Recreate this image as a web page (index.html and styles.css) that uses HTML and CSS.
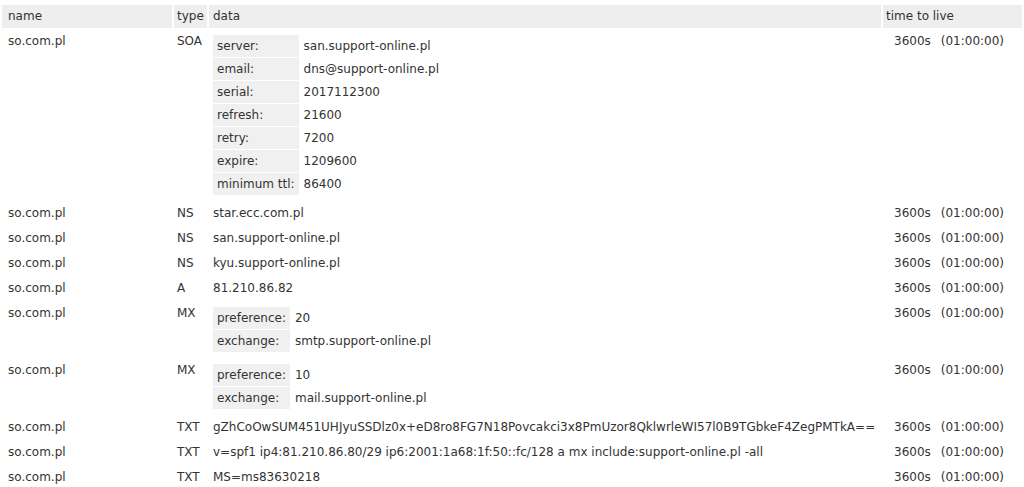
FILE: index.html
```html
<!DOCTYPE html>
<html>
<head>
<meta charset="utf-8">
<link rel="stylesheet" href="styles.css">
</head>
<body>
<table class="dns">
  <colgroup>
    <col class="c-name"><col class="c-type"><col class="c-data"><col class="c-ttl">
  </colgroup>
  <thead>
    <tr><th class="name">name</th><th class="type">type</th><th class="data">data</th><th class="ttl">time to live</th></tr>
  </thead>
  <tbody>
    <tr>
      <td class="name">so.com.pl</td><td class="type">SOA</td>
      <td class="data">
        <table class="sub">
          <tr><td class="k">server:</td><td class="v">san.support-online.pl</td></tr>
          <tr><td class="k">email:</td><td class="v">dns@support-online.pl</td></tr>
          <tr><td class="k">serial:</td><td class="v">2017112300</td></tr>
          <tr><td class="k">refresh:</td><td class="v">21600</td></tr>
          <tr><td class="k">retry:</td><td class="v">7200</td></tr>
          <tr><td class="k">expire:</td><td class="v">1209600</td></tr>
          <tr><td class="k">minimum ttl:</td><td class="v">86400</td></tr>
        </table>
      </td>
      <td class="ttl">3600s<span class="hms">(01:00:00)</span></td>
    </tr>
    <tr><td class="name">so.com.pl</td><td class="type">NS</td><td class="data">star.ecc.com.pl</td><td class="ttl">3600s<span class="hms">(01:00:00)</span></td></tr>
    <tr><td class="name">so.com.pl</td><td class="type">NS</td><td class="data">san.support-online.pl</td><td class="ttl">3600s<span class="hms">(01:00:00)</span></td></tr>
    <tr><td class="name">so.com.pl</td><td class="type">NS</td><td class="data">kyu.support-online.pl</td><td class="ttl">3600s<span class="hms">(01:00:00)</span></td></tr>
    <tr><td class="name">so.com.pl</td><td class="type">A</td><td class="data">81.210.86.82</td><td class="ttl">3600s<span class="hms">(01:00:00)</span></td></tr>
    <tr>
      <td class="name">so.com.pl</td><td class="type">MX</td>
      <td class="data">
        <table class="sub">
          <tr><td class="k">preference:</td><td class="v">20</td></tr>
          <tr><td class="k">exchange:</td><td class="v">smtp.support-online.pl</td></tr>
        </table>
      </td>
      <td class="ttl">3600s<span class="hms">(01:00:00)</span></td>
    </tr>
    <tr>
      <td class="name">so.com.pl</td><td class="type">MX</td>
      <td class="data">
        <table class="sub">
          <tr><td class="k">preference:</td><td class="v">10</td></tr>
          <tr><td class="k">exchange:</td><td class="v">mail.support-online.pl</td></tr>
        </table>
      </td>
      <td class="ttl">3600s<span class="hms">(01:00:00)</span></td>
    </tr>
    <tr><td class="name">so.com.pl</td><td class="type">TXT</td><td class="data">gZhCoOwSUM451UHJyuSSDlz0x+eD8ro8FG7N18Povcakci3x8PmUzor8QklwrleWI57l0B9TGbkeF4ZegPMTkA==</td><td class="ttl">3600s<span class="hms">(01:00:00)</span></td></tr>
    <tr><td class="name">so.com.pl</td><td class="type">TXT</td><td class="data">v=spf1 ip4:81.210.86.80/29 ip6:2001:1a68:1f:50::fc/128 a mx include:support-online.pl -all</td><td class="ttl">3600s<span class="hms">(01:00:00)</span></td></tr>
    <tr><td class="name">so.com.pl</td><td class="type">TXT</td><td class="data">MS=ms83630218</td><td class="ttl">3600s<span class="hms">(01:00:00)</span></td></tr>
  </tbody>
</table>
</body>
</html>
```

FILE: styles.css
```css
html, body {
  margin: 0;
  padding: 0;
  background: #ffffff;
}
body {
  padding-top: 3px;
  font-family: "DejaVu Sans", Verdana, sans-serif;
  font-size: 12px;
  color: #333333;
}
.dns {
  width: 100%;
  table-layout: fixed;
  border-collapse: separate;
  border-spacing: 2px;
}
.c-name { width: 170px; }
.c-type { width: 33px; }
.c-ttl { width: 139px; }
.dns th, .dns > tbody > tr > td {
  padding: 4px 3px;
  line-height: 15px;
  text-align: left;
  vertical-align: top;
  font-weight: normal;
  white-space: nowrap;
}
.dns th {
  background: #eeeeee;
}
.dns .name {
  padding-left: 6px;
}
.dns .data {
  padding-left: 4px;
}
.dns > tbody > tr > td.ttl {
  padding-left: 11px;
}
.hms {
  margin-left: 10px;
}
.sub {
  border-collapse: separate;
  border-spacing: 1px;
  margin: 0 0 0 -1px;
}
.sub td {
  padding: 3px 4px;
  line-height: 16px;
  white-space: nowrap;
}
.sub td.k {
  background: #f0f0f0;
}
.sub td.v {
  padding-left: 4px;
}
```
